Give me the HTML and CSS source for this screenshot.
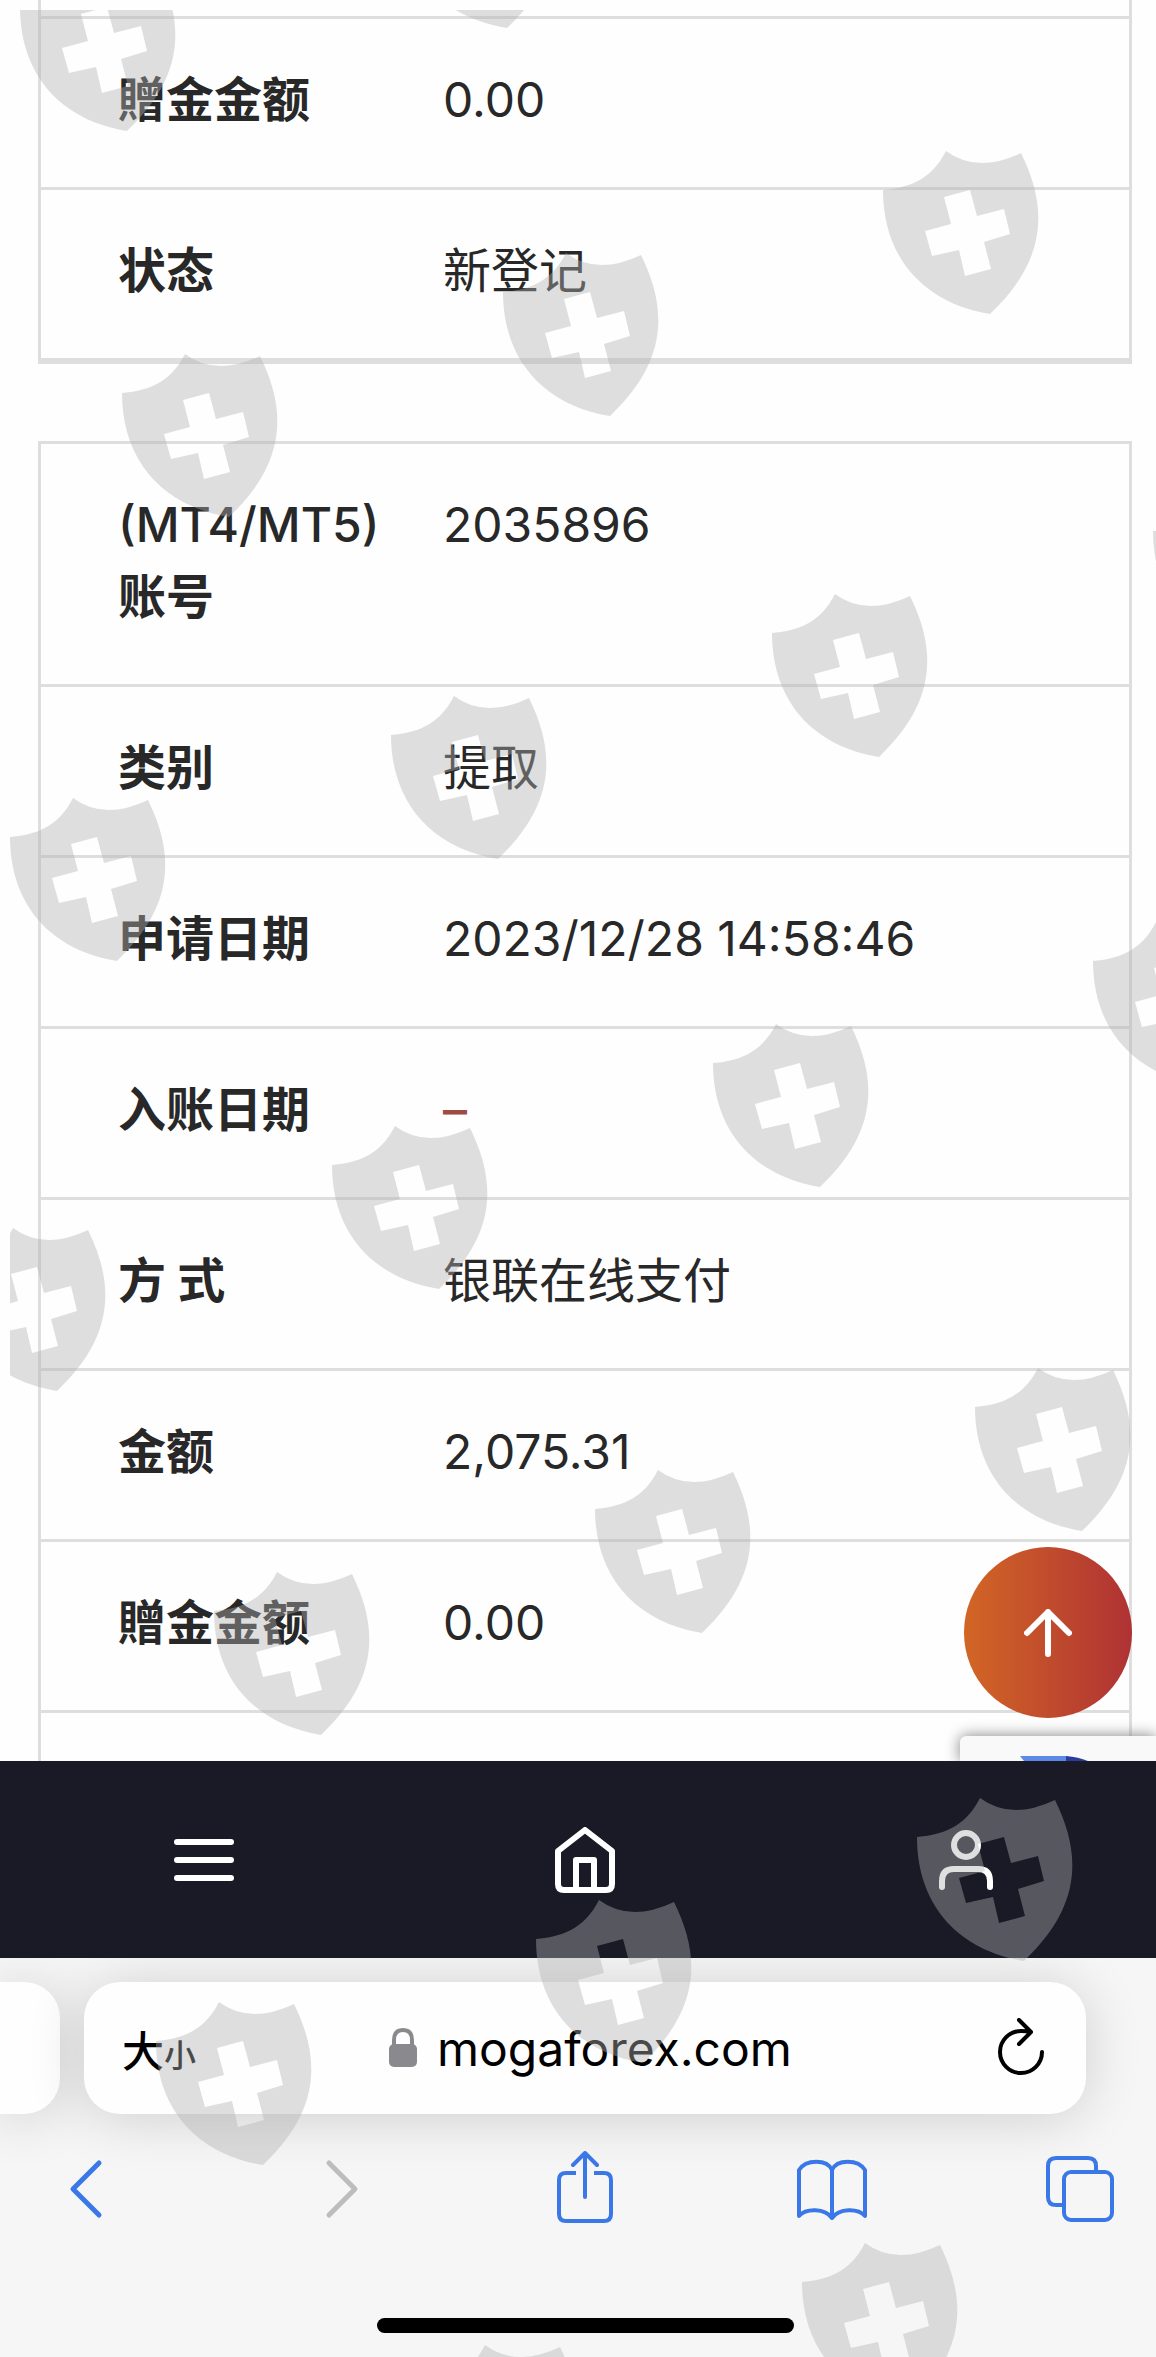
FILE: index.html
```html
<!DOCTYPE html>
<html lang="zh-CN">
<head>
    <meta charset="UTF-8">
    <meta name="viewport" content="width=device-width, initial-scale=1.0">
    <title>mogaforex.com</title>
    <link rel="stylesheet" href="styles.css">
</head>
<body>
    <main class="content">
        <table class="record record-first">
            <colgroup><col class="col-label"><col></colgroup>
            <tr class="row-end"><td colspan="2"></td></tr>
            <tr><th scope="row">贈金金额</th><td>0.00</td></tr>
            <tr><th scope="row">状态</th><td>新登记</td></tr>
        </table>

        <table class="record">
            <colgroup><col class="col-label"><col></colgroup>
            <tr><th scope="row"><span class="latin">(MT4/MT5)</span><br>账号</th><td>2035896</td></tr>
            <tr><th scope="row">类别</th><td>提取</td></tr>
            <tr><th scope="row">申请日期</th><td>2023/12/28 14:58:46</td></tr>
            <tr><th scope="row">入账日期</th><td class="empty">–</td></tr>
            <tr><th scope="row">方 式</th><td>银联在线支付</td></tr>
            <tr><th scope="row">金额</th><td>2,075.31</td></tr>
            <tr><th scope="row">贈金金额</th><td>0.00</td></tr>
            <tr><th></th><td></td></tr>
        </table>

        <button class="to-top" aria-label="返回顶部">
            <svg width="48" height="48" viewBox="0 0 48 48" fill="none" stroke="#fff" stroke-width="6" stroke-linecap="round" stroke-linejoin="round">
                <path d="M24 45V3M3 24L24 3l21 21"/>
            </svg>
        </button>

        <div class="captcha">
            <svg width="70" height="70" viewBox="0 0 70 70">
                <path d="M0 0H46V20H16z" fill="#5c8ae6"/>
                <path d="M46 0Q60 1 70 6V20H46z" fill="#2c3c9c"/>
            </svg>
        </div>
    </main>

    <nav class="site-nav">
        <button aria-label="菜单">
            <svg width="60" height="66" viewBox="0 0 60 66" fill="none" stroke="#fff" stroke-width="6" stroke-linecap="round">
                <path d="M3 15H57M3 33H57M3 51H57"/>
            </svg>
        </button>
        <button aria-label="首页">
            <svg width="60" height="66" viewBox="0 0 60 66" fill="none" stroke="#fff" stroke-width="6" stroke-linejoin="round">
                <path d="M30 3L3 24V57Q3 63 9 63H51Q57 63 57 57V24z"/>
                <path d="M21 63V33H39V63"/>
            </svg>
        </button>
        <button aria-label="我的">
            <svg width="60" height="66" viewBox="0 0 60 66" fill="none" stroke="#fff" stroke-width="6" stroke-linecap="round">
                <circle cx="30" cy="18" r="12"/>
                <path d="M6 60V54Q6 42 18 42H42Q54 42 54 54V60"/>
            </svg>
        </button>
    </nav>

    <footer class="browser">
        <div class="tabs">
            <div class="tab-prev"></div>
            <div class="address">
                <button class="text-size" aria-label="大小">大<small>小</small></button>
                <label class="url">
                    <svg width="28" height="40" viewBox="0 0 28 40">
                        <path d="M5 18V12Q5 2 14 2T23 12V18" fill="none" stroke="#8a8a8e" stroke-width="4"/>
                        <rect y="16" width="28" height="23" rx="5" fill="#8a8a8e"/>
                    </svg>
                    <input type="text" value="mogaforex.com" aria-label="网址">
                </label>
                <button class="reload" aria-label="刷新">
                    <svg width="46" height="60" viewBox="0 0 46 60" fill="none" stroke="#000" stroke-width="4" stroke-linecap="round" stroke-linejoin="round">
                        <path d="M33 14Q28 13 23 13A21 21 0 1 0 44 34M21 2L33 14L21 26"/>
                    </svg>
                </button>
            </div>
        </div>

        <div class="toolbar">
            <button aria-label="后退">
                <svg width="72" height="72" viewBox="0 0 72 72" fill="none" stroke="currentColor" stroke-width="5" stroke-linecap="round" stroke-linejoin="round">
                    <path d="M49 12L23 38L49 64"/>
                </svg>
            </button>
            <button class="off" aria-label="前进">
                <svg width="72" height="72" viewBox="0 0 72 72" fill="none" stroke="currentColor" stroke-width="5" stroke-linecap="round" stroke-linejoin="round">
                    <path d="M30 12L56 38L30 64"/>
                </svg>
            </button>
            <button aria-label="分享">
                <svg width="72" height="72" viewBox="0 0 72 72" fill="none" stroke="currentColor" stroke-width="4" stroke-linecap="round" stroke-linejoin="round">
                    <path d="M38 46V3M26 14L38 2L50 14"/>
                    <path d="M29 22H19Q12 22 12 29V63Q12 70 19 70H57Q64 70 64 63V29Q64 22 57 22H47" stroke-linecap="butt"/>
                </svg>
            </button>
            <button aria-label="书签">
                <svg width="72" height="72" viewBox="0 0 72 72" fill="none" stroke="currentColor" stroke-width="4" stroke-linecap="round" stroke-linejoin="round">
                    <path d="M36 19C31 8 10 8 3 19V65C10 57 29 57 36 67C43 57 62 57 69 65V19C62 8 41 8 36 19V66"/>
                </svg>
            </button>
            <button aria-label="标签页">
                <svg width="72" height="72" viewBox="0 0 72 72" fill="none" stroke="currentColor" stroke-width="4">
                    <rect x="20" y="21" width="48" height="48" rx="7"/>
                    <path d="M20 54H12Q4 54 4 46V15Q4 7 12 7H44Q52 7 52 15V21"/>
                </svg>
            </button>
        </div>
        <div class="home-area">
            <div class="home-bar"></div>
        </div>
    </footer>

    <!-- 盾牌水印 -->
    <svg class="watermark" aria-hidden="true">
        <defs>
            <path id="shield" fill-rule="evenodd" d="M0 39C24 37 48 30 63 0Q94 23 138 2C164 55 166 107 107 163C40 152 0 106 0 39zM61 46L68 73L42 80L49 105L76 99L82 125L108 118L101 91L127 83L121 58L94 65L87 39z"/>
        </defs>
        <g transform="translate(-10 -10)">
            <use href="#shield" x="20" y="-32"/>
            <use href="#shield" x="400" y="-135"/>
            <use href="#shield" x="883" y="151"/>
            <use href="#shield" x="503" y="253"/>
            <use href="#shield" x="122" y="354"/>
            <use href="#shield" x="1153" y="492"/>
            <use href="#shield" x="772" y="594"/>
            <use href="#shield" x="391" y="696"/>
            <use href="#shield" x="10" y="798"/>
            <use href="#shield" x="1093" y="922"/>
            <use href="#shield" x="713" y="1024"/>
            <use href="#shield" x="332" y="1126"/>
            <use href="#shield" x="-50" y="1228"/>
            <use href="#shield" x="975" y="1368"/>
            <use href="#shield" x="595" y="1470"/>
            <use href="#shield" x="214" y="1572"/>
            <use href="#shield" x="917" y="1798"/>
            <use href="#shield" x="536" y="1900"/>
            <use href="#shield" x="156" y="2002"/>
            <use href="#shield" x="802" y="2243"/>
            <use href="#shield" x="422" y="2345"/>
        </g>
    </svg>
</body>
</html>
```

FILE: styles.css
```css
* {
    margin: 0;
    padding: 0;
    box-sizing: border-box;
}

body {
    position: relative;
    display: flex;
    flex-direction: column;
    height: 100vh;
    overflow: hidden;
    background: #fefefe;
    color: #282828;
    font-family: Inter, "Noto Sans CJK SC", sans-serif;
}

button {
    border: none;
    background: none;
    color: inherit;
    font-family: inherit;
    cursor: pointer;
}

svg {
    display: block;
}

/* 记录表格 */
.content {
    position: relative;
    flex: 1;
    min-height: 0;
    overflow: hidden;
    padding: 0 24px 0 38px;
}

.record {
    width: 100%;
    margin-bottom: 77px;
    border: 3px solid #dedede;
    border-spacing: 0;
    table-layout: fixed;
    font-size: 48px;
    line-height: 72px;
}

.record-first {
    border-top: none;
}

.record .col-label {
    width: 402px;
}

.record th,
.record td {
    height: 171px;
    padding: 45px 0 51px;
    border-bottom: 3px solid #dedede;
    text-align: left;
    vertical-align: top;
    font-weight: 400;
}

.record th {
    padding-left: 77px;
    font-weight: 700;
}

.record .row-end td {
    height: 19px;
    padding: 0;
}

.record .latin {
    font-weight: 500;
}

.record .empty {
    color: #a04a44;
    font-weight: 500;
}

.to-top {
    position: absolute;
    right: 24px;
    bottom: 43px;
    display: flex;
    align-items: center;
    justify-content: center;
    width: 168px;
    height: 171px;
    border-radius: 50%;
    background: linear-gradient(90deg, #d26625, #af3234);
}

.captcha {
    position: absolute;
    right: 0;
    bottom: 0;
    width: 196px;
    height: 25px;
    padding: 20px 0 0 60px;
    border-radius: 6px 0 0 0;
    background: #f9f9f9;
    box-shadow: 0 0 15px #808080;
}

/* 网站底部导航 */
.site-nav {
    position: relative;
    display: grid;
    grid-template-columns: repeat(3, 1fr);
    align-items: center;
    height: 197px;
    padding-left: 14px;
    background: #191a26;
}

.site-nav button {
    justify-self: center;
}

/* 浏览器工具栏 */
.browser {
    overflow: hidden;
    background: #f6f6f6;
}

.tabs {
    display: flex;
    gap: 24px;
    padding: 24px 70px 37px 0;
}

.tab-prev,
.address {
    height: 132px;
    background: #fefefe;
    box-shadow: 0 4px 56px rgba(0, 0, 0, 0.16);
}

.tab-prev {
    width: 60px;
    border-radius: 0 36px 36px 0;
}

.address {
    flex: 1;
    display: flex;
    align-items: center;
    justify-content: space-between;
    padding: 0 42px 0 38px;
    border-radius: 36px;
    color: #000;
}

.text-size {
    font-size: 42px;
    font-weight: 500;
}

.text-size small {
    font-size: 32px;
}

.url {
    display: flex;
    align-items: center;
    gap: 20px;
}

.url input {
    width: 368px;
    border: none;
    outline: none;
    background: none;
    color: #000;
    font-family: Inter, sans-serif;
    font-size: 48px;
}

.toolbar {
    display: flex;
    justify-content: space-between;
    padding: 0 40px 0 50px;
    color: #3b78e7;
}

.toolbar .off {
    color: #bdbdbd;
}

.home-area {
    padding: 95px 0 24px 14px;
}

.home-bar {
    width: 417px;
    height: 15px;
    margin: 0 auto;
    border-radius: 8px;
    background: #000;
}

.watermark {
    position: absolute;
    top: 10px;
    left: 10px;
    width: calc(100% - 10px);
    height: calc(100% - 10px);
    overflow: hidden;
    fill: rgba(177, 177, 177, 0.41);
    pointer-events: none;
}
```
